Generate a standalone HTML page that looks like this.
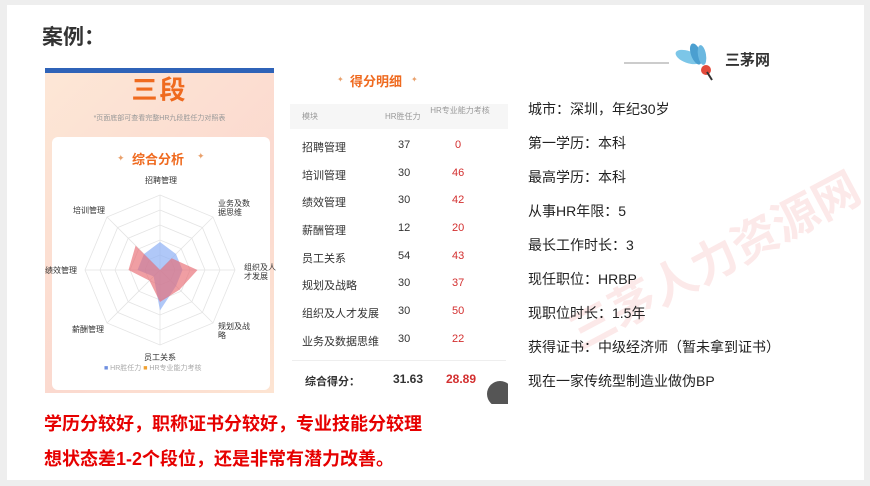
<!DOCTYPE html>
<html><head><meta charset="utf-8"><style>
*{margin:0;padding:0;box-sizing:border-box}
body{width:870px;height:486px;background:#eeeeee;font-family:"Liberation Sans","Noto Sans CJK SC",sans-serif;position:relative;overflow:hidden}
.slide{position:absolute;left:7px;top:5px;width:857px;height:475px;background:#fff;overflow:hidden}
.a{position:absolute;white-space:nowrap}
.r{font-size:14px;color:#222}
.row{position:absolute;left:0;width:218px;height:28px;font-size:11px;color:#333}
</style></head><body>
<div class="slide">
<div class="a" style="left:35px;top:16px;font-size:21px;font-weight:bold;color:#333">案例：</div>
<div class="a" style="left:617px;top:57px;width:45px;height:2px;background:#ccc"></div>
<svg class="a" style="left:667px;top:38px" width="42" height="40" viewBox="0 0 42 40">
<ellipse cx="14" cy="14" rx="13" ry="6" fill="#7cc6e8" transform="rotate(20 14 14)"/>
<ellipse cx="22" cy="11" rx="5" ry="11" fill="#4b9fd0" transform="rotate(-20 22 11)"/>
<ellipse cx="28" cy="12" rx="4" ry="10" fill="#6bb8e0" transform="rotate(-10 28 12)"/>
<circle cx="32" cy="27" r="5" fill="#e24a3b"/><line x1="33" y1="29" x2="38" y2="37" stroke="#333" stroke-width="2"/>
</svg>
<div class="a" style="left:718px;top:44px;font-size:15px;font-weight:bold;color:#333">三茅网</div>

<!-- watermark -->
<div class="a" style="left:545px;top:220px;font-size:46px;font-weight:bold;color:rgba(235,120,120,0.16);transform:rotate(-28deg)">三茅人力资源网</div>

<!-- left card -->
<div class="a" style="left:38px;top:63px;width:229px;height:325px;background:linear-gradient(135deg,#fde7d6,#fbd9cf 60%,#fde4d2);">
<div class="a" style="left:0;top:0;width:229px;height:5px;background:#2f63b8"></div>
<div class="a" style="left:0;top:2px;width:229px;text-align:center;font-size:26px;font-weight:bold;color:#ef6a1f;letter-spacing:2px">三段</div>
<div class="a" style="left:0;top:45px;width:229px;text-align:center;font-size:7px;color:#999">*页面底部可查看完整HR九段胜任力对照表</div>
<div class="a" style="left:7px;top:69px;width:218px;height:253px;background:#fff;border-radius:6px"></div>
</div>
<div class="a" style="left:125px;top:144px;font-size:13px;font-weight:bold;color:#ef6a1f">综合分析</div>
<div class="a" style="left:110px;top:148px;font-size:9px;color:#e9a06b">✦</div>
<div class="a" style="left:190px;top:146px;font-size:9px;color:#e9a06b">✦</div>
<svg class="a" style="left:-7px;top:-5px" width="300" height="400">
<g fill="none" stroke="#e4e4e4" stroke-width="0.8">
<polygon points="160,195 213,217 235,270 213,323 160,345 107,323 85,270 107,217"/>
<polygon points="160,210 202.4,227.6 220,270 202.4,312.4 160,330 117.6,312.4 100,270 117.6,227.6"/>
<polygon points="160,225 191.8,238.2 205,270 191.8,301.8 160,315 128.2,301.8 115,270 128.2,238.2"/>
<polygon points="160,240 181.2,248.8 190,270 181.2,291.2 160,300 138.8,291.2 130,270 138.8,248.8"/>
<polygon points="160,255 170.6,259.4 175,270 170.6,280.6 160,285 149.4,280.6 145,270 149.4,259.4"/>
<path d="M160 195V345M85 270H235M107 217L213 323M213 217L107 323"/>
</g>
<polygon points="160,242 176,254 182.5,270 176,286 160,310.5 153.6,276.4 137.5,270 144,254" fill="#8fb0f5" fill-opacity="0.7"/>
<polygon points="160,270 171.7,258.3 197.5,270 179.6,289.6 160,302 149.4,280.6 128.5,270 135.6,245.6" fill="#e86a72" fill-opacity="0.65"/>
</svg>
<div class="a" style="left:138px;top:170px;font-size:8px;color:#333">招聘管理</div>
<div class="a" style="left:66px;top:200px;font-size:8px;color:#333">培训管理</div>
<div class="a" style="left:211px;top:194px;font-size:8px;color:#333;line-height:9px">业务及数<br>据思维</div>
<div class="a" style="left:38px;top:260px;font-size:8px;color:#333">绩效管理</div>
<div class="a" style="left:237px;top:258px;font-size:8px;color:#333;line-height:9px">组织及人<br>才发展</div>
<div class="a" style="left:65px;top:319px;font-size:8px;color:#333">薪酬管理</div>
<div class="a" style="left:211px;top:317px;font-size:8px;color:#333;line-height:9px">规划及战<br>略</div>
<div class="a" style="left:137px;top:347px;font-size:8px;color:#333">员工关系</div>
<div class="a" style="left:97px;top:358px;font-size:7px;color:#aaa"><span style="color:#6f8fe0">■</span> HR胜任力 <span style="color:#f0a030">■</span> HR专业能力考核</div>

<!-- table -->
<div class="a" style="left:343px;top:66px;font-size:13px;font-weight:bold;color:#ef6a1f">得分明细</div>
<div class="a" style="left:330px;top:70px;font-size:8px;color:#e9a06b">✦</div>
<div class="a" style="left:404px;top:70px;font-size:8px;color:#e9a06b">✦</div>
<div class="a" style="left:283px;top:99px;width:218px;height:300px;overflow:hidden">
<div class="a" style="left:0;top:0;width:218px;height:25px;background:#f6f6f6"></div>
<div class="a" style="left:12px;top:7px;font-size:8px;color:#999">模块</div>
<div class="a" style="left:95px;top:7px;font-size:8px;color:#999">HR胜任力</div>
<div class="a" style="left:140px;top:2px;width:60px;text-align:center;font-size:8px;color:#999;line-height:10px;white-space:normal">HR专业能力考核</div>
<div class="a" style="left:197px;top:277px;width:26px;height:26px;border-radius:13px;background:#555"></div>
</div>
<div class="a" style="left:283px;top:130px">
<div class="row" style="top:0"><span class="a" style="left:12px;top:4px">招聘管理</span><span class="a" style="left:108px;top:4px">37</span><span class="a" style="left:165px;top:4px;color:#d32f2f">0</span></div>
<div class="row" style="top:28px"><span class="a" style="left:12px;top:4px">培训管理</span><span class="a" style="left:108px;top:4px">30</span><span class="a" style="left:162px;top:4px;color:#d32f2f">46</span></div>
<div class="row" style="top:55px"><span class="a" style="left:12px;top:4px">绩效管理</span><span class="a" style="left:108px;top:4px">30</span><span class="a" style="left:162px;top:4px;color:#d32f2f">42</span></div>
<div class="row" style="top:83px"><span class="a" style="left:12px;top:4px">薪酬管理</span><span class="a" style="left:108px;top:4px">12</span><span class="a" style="left:162px;top:4px;color:#d32f2f">20</span></div>
<div class="row" style="top:111px"><span class="a" style="left:12px;top:4px">员工关系</span><span class="a" style="left:108px;top:4px">54</span><span class="a" style="left:162px;top:4px;color:#d32f2f">43</span></div>
<div class="row" style="top:138px"><span class="a" style="left:12px;top:4px">规划及战略</span><span class="a" style="left:108px;top:4px">30</span><span class="a" style="left:162px;top:4px;color:#d32f2f">37</span></div>
<div class="row" style="top:166px"><span class="a" style="left:12px;top:4px">组织及人才发展</span><span class="a" style="left:108px;top:4px">30</span><span class="a" style="left:162px;top:4px;color:#d32f2f">50</span></div>
<div class="row" style="top:194px"><span class="a" style="left:12px;top:4px">业务及数据思维</span><span class="a" style="left:108px;top:4px">30</span><span class="a" style="left:162px;top:4px;color:#d32f2f">22</span></div>
</div>
<div class="a" style="left:285px;top:355px;width:214px;height:1px;background:#eee"></div>
<div class="a" style="left:298px;top:368px;font-size:11px;font-weight:bold;color:#333">综合得分：</div>
<div class="a" style="left:386px;top:367px;font-size:12px;font-weight:bold;color:#333">31.63</div>
<div class="a" style="left:439px;top:367px;font-size:12px;font-weight:bold;color:#d32f2f">28.89</div>

<!-- right text -->
<div class="a r" style="left:521px;top:94px">城市：深圳，年纪30岁</div>
<div class="a r" style="left:521px;top:128px">第一学历：本科</div>
<div class="a r" style="left:521px;top:162px">最高学历：本科</div>
<div class="a r" style="left:521px;top:196px">从事HR年限：5</div>
<div class="a r" style="left:521px;top:230px">最长工作时长：3</div>
<div class="a r" style="left:521px;top:264px">现任职位：HRBP</div>
<div class="a r" style="left:521px;top:298px">现职位时长：1.5年</div>
<div class="a r" style="left:521px;top:332px">获得证书：中级经济师（暂未拿到证书）</div>
<div class="a r" style="left:521px;top:366px">现在一家传统型制造业做伪BP</div>

<div class="a" style="left:37px;top:402px;font-size:18px;font-weight:bold;color:#e60000;line-height:35px">学历分较好，职称证书分较好，专业技能分较理<br>想状态差1-2个段位，还是非常有潜力改善。</div>
</div>
</body></html>
